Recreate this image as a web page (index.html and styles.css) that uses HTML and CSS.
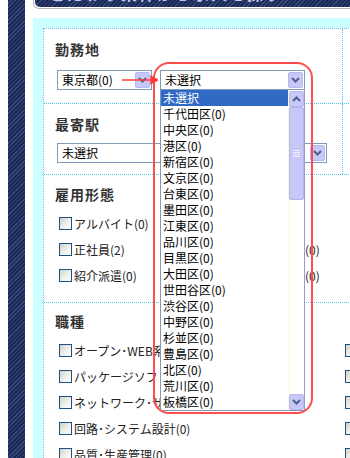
FILE: index.html
```html
<!DOCTYPE html>
<html lang="ja">
<head>
    <meta charset="UTF-8">
    <meta name="viewport" content="width=device-width, initial-scale=1.0">
    <title>求人検索 - 条件を指定</title>
    <link rel="stylesheet" href="styles.css">
</head>
<body>
<div class="page">
    <div class="side-stripe"></div>

    <div class="content">
        <div class="title-bar">
            <div class="title-inner"><span class="title-text">こだわり条件から求人を探す</span></div>
        </div>

        <div class="search-area">
            <div class="panel">

                <!-- 勤務地 -->
                <div class="section section-row">
                    <div class="cell cell-area">
                        <h3 class="label">勤務地</h3>
                        <div class="pref-line">
                            <div class="select select-pref">
                                <span>東京都(0)</span>
                                <span class="drop-btn">
                                    <svg class="chevron" viewBox="0 0 9 6"><path d="M1 1 4.5 4.5 8 1"/></svg>
                                </span>
                            </div>
                            <svg class="arrow" viewBox="0 0 36 10">
                                <line x1="0" y1="5" x2="30" y2="5"/>
                                <polygon points="29,1.5 36,5 29,8.5"/>
                            </svg>
                            <div class="city-wrap">
                                <div class="select select-city">
                                    <span>未選択</span>
                                    <span class="drop-btn">
                                        <svg class="chevron" viewBox="0 0 9 6"><path d="M1 1 4.5 4.5 8 1"/></svg>
                                    </span>
                                </div>
                                <div class="city-list">
                                    <ul class="city-items">
                                        <li class="is-selected">未選択</li>
                                        <li>千代田区(0)</li>
                                        <li>中央区(0)</li>
                                        <li>港区(0)</li>
                                        <li>新宿区(0)</li>
                                        <li>文京区(0)</li>
                                        <li>台東区(0)</li>
                                        <li>墨田区(0)</li>
                                        <li>江東区(0)</li>
                                        <li>品川区(0)</li>
                                        <li>目黒区(0)</li>
                                        <li>大田区(0)</li>
                                        <li>世田谷区(0)</li>
                                        <li>渋谷区(0)</li>
                                        <li>中野区(0)</li>
                                        <li>杉並区(0)</li>
                                        <li>豊島区(0)</li>
                                        <li>北区(0)</li>
                                        <li>荒川区(0)</li>
                                        <li>板橋区(0)</li>
                                    </ul>
                                    <div class="scrollbar">
                                        <span class="sb-btn">
                                            <svg class="chevron" viewBox="0 0 9 6"><path d="M1 5 4.5 1.5 8 5"/></svg>
                                        </span>
                                        <span class="sb-thumb"><span class="sb-grip"></span></span>
                                        <span class="sb-track"></span>
                                        <span class="sb-btn">
                                            <svg class="chevron" viewBox="0 0 9 6"><path d="M1 1 4.5 4.5 8 1"/></svg>
                                        </span>
                                    </div>
                                </div>
                                <div class="callout"></div>
                            </div>
                        </div>
                    </div>
                    <div class="cell-side"></div>
                </div>

                <!-- 最寄駅 -->
                <div class="section section-row">
                    <div class="cell cell-station">
                        <h3 class="label">最寄駅</h3>
                        <div class="select select-station">
                            <span>未選択</span>
                            <span class="drop-btn">
                                <svg class="chevron" viewBox="0 0 9 6"><path d="M1 1 4.5 4.5 8 1"/></svg>
                            </span>
                        </div>
                    </div>
                    <div class="cell-side"></div>
                </div>

                <!-- 雇用形態 -->
                <div class="section section-wide">
                    <h3 class="label">雇用形態</h3>
                    <div class="checks checks-type">
                        <label class="check"><span class="box"></span>アルバイト(0)</label>
                        <label class="check"><span class="box"></span>派遣(0)</label>
                        <label class="check"><span class="box"></span>正社員(2)</label>
                        <label class="check"><span class="box"></span>契約社員(0)</label>
                        <label class="check"><span class="box"></span>紹介派遣(0)</label>
                        <label class="check"><span class="box"></span>業務委託(0)</label>
                    </div>
                </div>

                <!-- 職種 -->
                <div class="section section-wide section-job">
                    <h3 class="label">職種</h3>
                    <div class="checks checks-job">
                        <label class="check"><span class="box"></span>オープン･WEB系エンジニア(0)</label>
                        <label class="check"><span class="box"></span>組込･制御系(0)</label>
                        <label class="check"><span class="box"></span>パッケージソフト･ミドルウェア開発(0)</label>
                        <label class="check"><span class="box"></span>社内SE(0)</label>
                        <label class="check"><span class="box"></span>ネットワーク･サーバー設計(0)</label>
                        <label class="check"><span class="box"></span>運用･保守(0)</label>
                        <label class="check"><span class="box"></span>回路･システム設計(0)</label>
                        <label class="check"><span class="box"></span>テスト･評価(0)</label>
                        <label class="check"><span class="box"></span>品質･生産管理(0)</label>
                        <label class="check"><span class="box"></span>ITコンサルタント(0)</label>
                    </div>
                </div>

            </div>
        </div>
    </div>
</div>
</body>
</html>
```

FILE: styles.css
```css
* {
    margin: 0;
    padding: 0;
    box-sizing: border-box;
}

body {
    font-family: "Noto Sans CJK JP", "Noto Sans", sans-serif;
    font-size: 12px;
    color: #222;
    background: #fff;
    overflow: hidden;
}

.page {
    display: flex;
    height: 458px;
    padding-left: 8px;
    overflow: hidden;
}

/* navy hatched strip on the left */
.side-stripe {
    flex: none;
    width: 17px;
    margin-right: 8px;
    background-color: #1b2a55;
    background-image: repeating-linear-gradient(-45deg, #36487c 0 1px, #1b2a55 1px 3px);
}

.content {
    flex: none;
    width: 420px;
    display: flex;
    flex-direction: column;
}

/* Title bar (only its lower edge is on screen) */
.title-bar {
    flex: none;
    height: 9px;
    margin-bottom: 9px;
    padding: 0 1px 1px 1px;
    background: #fff;
    border: 1px solid #b5b5b5;
    border-top: none;
    border-radius: 0 0 6px 6px;
}

.title-inner {
    height: 100%;
    padding-left: 14px;
    background-color: #1b2a55;
    background-image: repeating-linear-gradient(-45deg, #36487c 0 1px, #1b2a55 1px 3px);
    border-radius: 0 0 5px 5px;
    overflow: hidden;
}

.title-text {
    display: block;
    margin-top: -16px;
    line-height: 18px;
    font-size: 16px;
    font-weight: bold;
    color: #c4cbec;
    letter-spacing: 2px;
    white-space: nowrap;
}

/* Search panel */
.search-area {
    flex: 1;
    padding: 10px 0 0 10px;
    background: #ccffff;
}

.panel {
    height: 100%;
    background: #fff;
    border-top: 1px dotted #7fb8f0;
    border-left: 1px dotted #7fb8f0;
}

.section {
    border-bottom: 1px dotted #4cc4f0;
}

.section-row {
    display: flex;
}

.cell {
    flex: none;
    width: 298px;
    padding-left: 11px;
}

.cell-area {
    padding-top: 12px;
    padding-bottom: 13px;
}

.cell-station {
    padding-top: 12px;
    padding-bottom: 11px;
}

.cell-side {
    flex: 1;
    border-left: 1px dotted #4cc4f0;
}

.section-wide {
    padding: 11px 0 14px 11px;
}

.section-job {
    padding-top: 10px;
}

.label {
    font-size: 14px;
    line-height: 16px;
    font-weight: bold;
    letter-spacing: 1px;
    color: #333;
}

/* Select boxes */
.pref-line {
    position: relative;
    display: flex;
    gap: 8px;
    margin: 13px 0 0 2px;
}

.select {
    display: flex;
    align-items: center;
    height: 20px;
    padding-left: 4px;
    border: 1px solid #7f9db9;
    background: #fff;
    line-height: 16px;
    color: #000;
    white-space: nowrap;
}

.select-pref {
    width: 95px;
}

.select-city {
    width: 145px;
}

.select-station {
    width: 270px;
    margin: 11px 0 0 2px;
}

.drop-btn {
    display: flex;
    align-items: center;
    justify-content: center;
    width: 15px;
    height: 16px;
    margin-left: auto;
    margin-right: 1px;
    background: #c8c8f8;
    border: 1px solid #b8b8f0;
    border-radius: 2px;
}

.chevron {
    width: 9px;
    height: 6px;
    fill: none;
    stroke: #4d6185;
    stroke-width: 2;
}

/* red annotation */
.arrow {
    position: absolute;
    left: 65px;
    top: 5px;
    width: 36px;
    height: 10px;
    z-index: 11;
    stroke: #ff3b3b;
    stroke-width: 1.5;
    fill: #ff3b3b;
}

.city-wrap {
    position: relative;
    z-index: 10;
    width: 145px;
}

.callout {
    position: absolute;
    left: -7px;
    top: -8px;
    width: 160px;
    height: 352px;
    border: 2px solid #ff4d4d;
    border-radius: 16px;
}

/* open dropdown list */
.city-list {
    position: absolute;
    top: 20px;
    left: 0;
    width: 145px;
    height: 321px;
    display: flex;
    background: #fff;
    border: 1px solid #7f9db9;
    border-top: none;
    border-right-color: #9a9ad0;
}

.city-items {
    flex: 1;
    list-style: none;
    overflow: hidden;
}

.city-items li {
    height: 16px;
    line-height: 16px;
    padding-left: 2px;
    color: #000;
    white-space: nowrap;
}

.city-items li.is-selected {
    background: #316ac5;
    color: #fff;
}

.scrollbar {
    flex: none;
    width: 16px;
    display: flex;
    flex-direction: column;
    padding-top: 1px;
    background: #fff;
    border-left: 1px solid #fdfbd8;
}

.sb-btn {
    flex: none;
    display: flex;
    align-items: center;
    justify-content: center;
    height: 16px;
    background: #c8c8f8;
    border: 1px solid #b8b8f0;
    border-radius: 2px;
}

.sb-thumb {
    flex: none;
    display: flex;
    align-items: center;
    justify-content: center;
    height: 93px;
    background: #c8c8f8;
    border: 1px solid #b4b4ec;
    border-radius: 2px;
}

.sb-grip {
    width: 7px;
    height: 8px;
    background: repeating-linear-gradient(#eeeeff 0 1px, transparent 1px 2px);
}

.sb-track {
    flex: 1;
}

/* Checkboxes */
.checks {
    display: grid;
    margin: 8px 0 0 4px;
}

.checks-type {
    grid-template-columns: 183px 1fr;
}

.checks-job {
    grid-template-columns: 286px 1fr;
}

.check {
    display: flex;
    align-items: center;
    gap: 2px;
    height: 26px;
    white-space: nowrap;
    color: #222;
}

.box {
    flex: none;
    width: 13px;
    height: 13px;
    border: 1px solid #1c5180;
    background: linear-gradient(135deg, #d0d0c8 0%, #ececE6 45%, #fff 100%);
}
```
